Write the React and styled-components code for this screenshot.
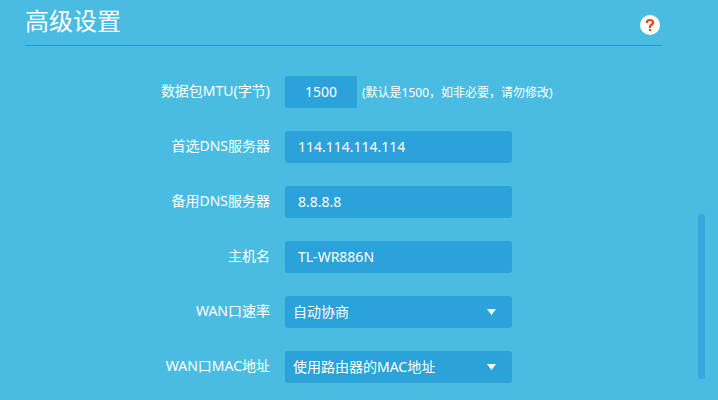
import { useState } from "react";
import styled, { createGlobalStyle } from "styled-components";

const colors = {
  page: "#4bbce1",
  field: "#2ca2da",
  line: "#1f9ad3",
  thumb: "#36a8dc",
  help: "#ff3f00",
  text: "#ffffff",
};

const GlobalStyle = createGlobalStyle`
  * {
    box-sizing: border-box;
  }

  body {
    margin: 0;
    background: ${colors.page};
    color: ${colors.text};
    font-family: "Noto Sans", "Noto Sans CJK SC", sans-serif;
    font-size: 14px;
  }

  input,
  select,
  button {
    margin: 0;
    border: 0;
    color: inherit;
    font: inherit;
  }
`;

const Page = styled.div`
  display: flex;
  gap: 36px;
  min-height: 100vh;
  padding: 0 13px 0 25px;
`;

const Content = styled.main`
  flex: 1;
  min-width: 0;
`;

const Header = styled.header`
  display: flex;
  justify-content: space-between;
  align-items: center;
  padding-right: 2px;
  border-bottom: 1px solid ${colors.line};
`;

const Title = styled.h1`
  margin: 0;
  padding-bottom: 3px;
  font-size: 24px;
  font-weight: 400;
  line-height: 42px;
`;

const HelpButton = styled.button`
  width: 20px;
  height: 20px;
  margin-top: 5px;
  padding: 0;
  border-radius: 50%;
  background: #ffffff;
  cursor: pointer;

  svg {
    display: block;
  }
`;

const Form = styled.form`
  display: flex;
  flex-direction: column;
  gap: 23px;
  padding: 30px 0 17px;
`;

const Row = styled.div`
  display: flex;
  align-items: center;
`;

const Label = styled.label`
  width: 245px;
  margin-right: 15px;
  padding-bottom: 2px;
  line-height: 30px;
  text-align: right;
`;

const TextInput = styled.input`
  width: ${({ $short }) => ($short ? "72px" : "227px")};
  height: 32px;
  padding: ${({ $short }) => ($short ? "0 0 1px" : "0 13px 1px")};
  border-radius: 3px;
  background: ${colors.field};
  text-align: ${({ $short }) => ($short ? "center" : "left")};
`;

const Note = styled.span`
  margin-left: 5px;
  font-size: 12px;
  white-space: nowrap;
`;

const SelectBox = styled.div`
  position: relative;
  width: 227px;

  svg {
    position: absolute;
    top: 13px;
    right: 16px;
    pointer-events: none;
  }
`;

const Select = styled.select`
  display: block;
  width: 100%;
  height: 32px;
  padding: 0 32px 2px 8px;
  border-radius: 3px;
  background: ${colors.field};
  appearance: none;
`;

const ScrollThumb = styled.div`
  align-self: flex-end;
  width: 7px;
  height: 165px;
  margin-bottom: 21px;
  border-radius: 3px;
  background: ${colors.thumb};
`;

function HelpIcon() {
  return (
    <svg width="20" height="20" viewBox="0 0 20 20" aria-hidden="true">
      <path
        d="M7 8V7.2C7 5.7 8.2 5 10 5s3.1.9 3.1 2.4c0 2.1-3.1 2.2-3.1 4.6v1"
        fill="none"
        stroke={colors.help}
        strokeWidth="2.2"
      />
      <rect x="9" y="14" width="2" height="2" fill={colors.help} />
    </svg>
  );
}

function SelectField({ id, value, onChange, options }) {
  return (
    <SelectBox>
      <Select id={id} value={value} onChange={onChange}>
        {options.map((option) => (
          <option key={option}>{option}</option>
        ))}
      </Select>
      <svg width="9" height="6" viewBox="0 0 9 6" aria-hidden="true">
        <path d="M0 0h9L4.5 6z" fill={colors.text} />
      </svg>
    </SelectBox>
  );
}

export default function App() {
  const [values, setValues] = useState({
    mtu: "1500",
    dns1: "114.114.114.114",
    dns2: "8.8.8.8",
    host: "TL-WR886N",
    speed: "自动协商",
    mac: "使用路由器的MAC地址",
  });

  const bind = (id) => ({
    id,
    value: values[id],
    onChange: (e) => setValues({ ...values, [id]: e.target.value }),
  });

  return (
    <>
      <GlobalStyle />
      <Page>
        <Content>
          <Header>
            <Title>高级设置</Title>
            <HelpButton type="button" aria-label="帮助">
              <HelpIcon />
            </HelpButton>
          </Header>
          <Form>
            <Row>
              <Label htmlFor="mtu">数据包MTU(字节)</Label>
              <TextInput $short {...bind("mtu")} />
              <Note>(默认是1500，如非必要，请勿修改)</Note>
            </Row>
            <Row>
              <Label htmlFor="dns1">首选DNS服务器</Label>
              <TextInput {...bind("dns1")} />
            </Row>
            <Row>
              <Label htmlFor="dns2">备用DNS服务器</Label>
              <TextInput {...bind("dns2")} />
            </Row>
            <Row>
              <Label htmlFor="host">主机名</Label>
              <TextInput {...bind("host")} />
            </Row>
            <Row>
              <Label htmlFor="speed">WAN口速率</Label>
              <SelectField {...bind("speed")} options={["自动协商"]} />
            </Row>
            <Row>
              <Label htmlFor="mac">WAN口MAC地址</Label>
              <SelectField {...bind("mac")} options={["使用路由器的MAC地址"]} />
            </Row>
          </Form>
        </Content>
        <ScrollThumb />
      </Page>
    </>
  );
}
